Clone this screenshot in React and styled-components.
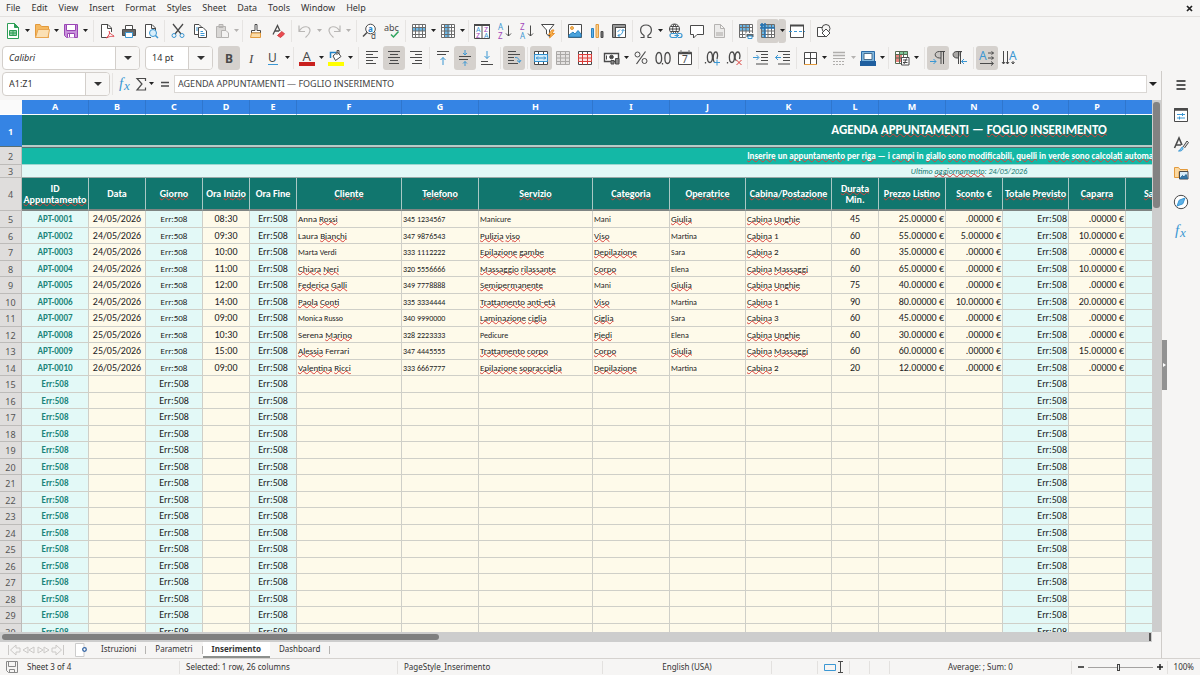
import React from "react";
import styled, { createGlobalStyle, css } from "styled-components";

const INK = "#4a4a4a";
const BLUE = "#3b97d3";
const TEAL = "#11766e";
const UI_FONT = '"Noto Sans", sans-serif';
const CELL_FONT = 'Carlito, Lato, sans-serif';

const GlobalStyle = createGlobalStyle`
  * { box-sizing: border-box; }
  body { margin: 0; background: #f6f5f4; }
  button, input { font: inherit; color: inherit; }
`;

const Shell = styled.div`
  display: flex;
  flex-direction: column;
  height: 100vh;
  overflow: hidden;
  background: #f6f5f4;
  color: #333;
  font: 9px/12px ${UI_FONT};
`;

/* ---------- menu bar ---------- */
const MenuBar = styled.nav`
  display: flex;
  align-items: center;
  height: 17px;
  padding: 0 5px 0 1px;
  border-bottom: 1px solid #e3e1df;
  flex: none;
`;
const MenuItem = styled.button`
  border: 0;
  background: none;
  padding: 0 5px 0 6px;
  line-height: 16px;
  &:first-child { padding-left: 5px; }
`;
const CloseButton = styled.button`
  margin-left: auto;
  border: 0;
  padding: 0;
  width: 12px;
  height: 12px;
  background: none;
  display: grid;
  place-items: center;
`;

/* ---------- toolbars ---------- */
const Toolbar = styled.div`
  display: flex;
  align-items: center;
  height: 27px;
  padding-left: 2px;
  flex: none;
`;
const ToolButton = styled.button`
  width: 22px;
  height: 24px;
  padding: 0;
  border: 0;
  border-radius: 3px;
  display: grid;
  place-items: center;
  flex: none;
  background: ${(p) => (p.$on ? "#d5d1cd" : "none")};
`;
const WizardButton = styled(ToolButton)`
  width: 20px;
`;
const SumButton = styled(ToolButton)`
  width: 12px;
`;
const EqualsButton = styled(ToolButton)`
  width: 18px;
`;
const CaretButton = styled.button`
  width: ${(p) => (p.$wide ? "9px" : "7px")};
  height: 24px;
  padding: 0;
  border: 0;
  border-radius: 0 3px 3px 0;
  display: grid;
  place-items: center;
  flex: none;
  color: ${(p) => (p.$off ? "#b5b3b1" : "#222")};
  background: ${(p) => (p.$on ? "#d5d1cd" : "none")};
`;
const Separator = styled.i`
  width: 1px;
  height: 22px;
  margin: 0 2px 0 ${(p) => (p.$wide ? "4px" : "2px")};
  background: #e6e4e2;
  flex: none;
`;
const Combo = styled.div`
  display: flex;
  width: ${(p) => p.$width}px;
  height: 24px;
  margin-right: ${(p) => p.$gap || 0}px;
  border: 1px solid #d3cfcb;
  border-radius: 4px;
  overflow: hidden;
  background: #fff;
  flex: none;
`;
const ComboInput = styled.input`
  flex: 1;
  min-width: 0;
  border: 0;
  outline: 0;
  padding: 0 6px;
  background: none;
  font-style: ${(p) => (p.$italic ? "italic" : "normal")};
`;
const ComboButton = styled.button`
  width: 24px;
  padding: 0;
  border: 0;
  border-left: 1px solid #d3cfcb;
  background: #f8f7f6;
  display: grid;
  place-items: center;
`;

/* ---------- work area ---------- */
const Work = styled.div`
  display: flex;
  flex: 1;
  min-height: 0;
`;
const Main = styled.main`
  display: flex;
  flex-direction: column;
  flex: 1;
  min-width: 0;
`;
const FormulaBar = styled.div`
  display: flex;
  align-items: center;
  height: 29px;
  padding: 0 4px 4px 2px;
  flex: none;
`;
const FormulaInput = styled.input`
  flex: 1;
  min-width: 0;
  height: 18px;
  padding: 0 3px;
  margin-right: 1px;
  border: 1px solid #dad7d4;
  outline: 0;
  background: #fff;
  color: #444;
`;
const GridArea = styled.div`
  display: flex;
  flex: 1;
  min-height: 0;
`;
const GridView = styled.div`
  flex: 1;
  min-width: 0;
  overflow: hidden;
`;

/* ---------- spreadsheet ---------- */
const Grid = styled.table`
  width: 1916px;
  table-layout: fixed;
  border-collapse: separate;
  border-spacing: 0;
  font: 10px/12px ${CELL_FONT};
  color: #222;
`;
const Row = styled.tr`
  height: ${(p) => p.$h}px;
`;
const ColumnHead = styled.th`
  padding: 0;
  background: ${(p) => (p.$corner ? "#fafafa" : "#3584e4")};
  border-right: 1px solid ${(p) => (p.$corner ? "#fafafa" : "#2f76cd")};
  border-bottom: 1px solid #fff;
  color: #fff;
  font: bold 9px/12px ${UI_FONT};
`;
const RowHead = styled.th`
  padding: 2px 0 0;
  background: ${(p) => (p.$on ? "#3584e4" : "#dfdddc")};
  border-right: 1px solid ${(p) => (p.$on ? "#3584e4" : "#bdbbb9")};
  border-bottom: 1px solid ${(p) => (p.$on ? "#5b6f70" : "#bdbbb9")};
  color: ${(p) => (p.$on ? "#fff" : "#555")};
  font: ${(p) => (p.$on ? "bold" : "normal")} 9px/10px ${UI_FONT};
`;
const Banner = styled.td`
  padding: 0;
  text-align: center;
  white-space: nowrap;
  ${(p) => p.$kind === "title" && css`
    background: ${TEAL};
    color: #fff;
    font: bold 13px/16px ${CELL_FONT};
    border-bottom: 2px solid #b9cbc8;
  `}
  ${(p) => p.$kind === "note" && css`
    background: #14b8a6;
    color: #fff;
    font-weight: bold;
    font-size: 9px;
    border-top: 1px solid #5b6f70;
    border-bottom: 1px solid #9fd8d0;
  `}
  ${(p) => p.$kind === "date" && css`
    background: #e3f9f7;
    color: ${TEAL};
    font-style: italic;
    font-size: 8px;
    border-bottom: 1px solid #9aa9a7;
  `}
`;
const HeadCell = styled.th`
  padding: 0;
  background: ${TEAL};
  color: #fff;
  font: bold 10px/11px ${CELL_FONT};
  white-space: pre;
  border-right: 1px solid #a9c8c4;
  border-bottom: 2px solid #7f8583;
`;
const Cell = styled.td`
  padding: 0 1px;
  overflow: hidden;
  white-space: nowrap;
  line-height: 12px;
  background: ${(p) => (p.$calc ? "#e3f9f7" : "#fefaea")};
  border-right: 1px solid #cfcfc8;
  border-bottom: 1px solid #cfcfc8;
  text-align: ${(p) => p.$align || "left"};
  font-size: ${(p) => p.$size}px;
  ${(p) => p.$id && css`
    color: #1b857a;
    font-weight: bold;
  `}
`;
const Misspelt = styled.span`
  text-decoration: underline wavy #d9403a 1px;
  text-decoration-skip-ink: none;
  text-underline-offset: -1px;
`;

/* ---------- scroll bars, tabs, sidebar, status ---------- */
const VScroll = styled.div`
  width: 9px;
  padding: 2px 1px;
  background: #cdcdcd;
  flex: none;
`;
const VThumb = styled.div`
  height: 106px;
  border-radius: 3px;
  background: #828282;
`;
const HScroll = styled.div`
  display: flex;
  align-items: center;
  justify-content: space-between;
  height: 10px;
  margin-right: 9px;
  padding-left: 2px;
  background: #cdcdcd;
  flex: none;
`;
const HThumb = styled.div`
  width: 38%;
  height: 6px;
  border-radius: 3px;
  background: #7f7f7f;
`;
const HGrip = styled.div`
  width: 3px;
  height: 8px;
  border-left: 2px solid #555;
`;
const Tabs = styled.div`
  display: flex;
  align-items: center;
  height: 16px;
  padding-left: 6px;
  font-size: 8px;
  flex: none;
`;
const TabNav = styled.button`
  width: 15px;
  height: 14px;
  padding: 0;
  border: 0;
  background: none;
`;
const AddTab = styled(TabNav)`
  width: 14px;
  margin: 0 4px 0 8px;
`;
const Tab = styled.button`
  height: 16px;
  padding: 0 9px;
  border: 0;
  border-bottom: 2px solid ${(p) => (p.$on ? "#8d908d" : "transparent")};
  background: ${(p) => (p.$on ? "#fff" : "none")};
  font-weight: ${(p) => (p.$on ? "bold" : "normal")};
  line-height: 14px;
`;
const TabRule = styled.i`
  width: 1px;
  height: 8px;
  background: #b5b3b1;
`;
const Sidebar = styled.aside`
  display: flex;
  width: 39px;
  border-left: 1px solid #cfccc9;
  flex: none;
`;
const Splitter = styled.button`
  align-self: center;
  width: 5px;
  height: 50px;
  padding: 0;
  border: 0;
  background: #929292;
  display: grid;
  place-items: center;
`;
const Deck = styled.div`
  flex: 1;
  display: flex;
  flex-direction: column;
  align-items: center;
  padding: 2px 5px 0 0;
`;
const DeckButton = styled.button`
  width: 24px;
  height: 29px;
  padding: 0;
  border: 0;
  background: none;
  display: grid;
  place-items: center;
  &:first-child { height: 24px; margin-bottom: 3px; }
`;
const StatusBar = styled.footer`
  display: flex;
  align-items: center;
  height: 17px;
  border-top: 1px solid #d5d2cf;
  font-size: 8px;
  flex: none;
`;
const Field = styled.div`
  flex: ${(p) => (p.$grow ? `${p.$grow} 1 0` : `0 0 ${p.$width}px`)};
  height: 13px;
  display: flex;
  align-items: center;
  justify-content: ${(p) => (p.$center ? "center" : "flex-start")};
  padding: 0 6px;
  gap: ${(p) => p.$gap || 0}px;
  border-left: ${(p) => (p.$first ? "0" : "1px solid #e3e1df")};
  white-space: nowrap;
`;
const ZoomField = styled(Field)`
  padding: 0 2px 0 4px;
`;
const ZoomRange = styled.input`
  appearance: none;
  flex: none;
  width: 65px;
  height: 12px;
  margin: 0;
  background: linear-gradient(#a5a3a1, #a5a3a1) center / 100% 1px no-repeat;
  &::-webkit-slider-thumb {
    appearance: none;
    width: 3px;
    height: 7px;
    border: 1px solid #444;
    background: #eee;
  }
`;
const ZoomButton = styled.button`
  flex: none;
  width: 10px;
  height: 12px;
  padding: 0;
  border: 0;
  background: none;
  display: grid;
  place-items: center;
`;

/* ---------- drawings ---------- */
const Drawing = styled.svg`
  display: block;
  overflow: visible;
`;
const Svg = ({ children, w = 16, h = 16 }) => (
  <Drawing width={w} height={h} viewBox={`0 0 ${w} ${h}`} fill="none" stroke={INK} strokeWidth="1" aria-hidden="true">
    {children}
  </Drawing>
);
const Caret = ({ big }) => (
  <Drawing width={big ? 8 : 5} height={big ? 4 : 3} viewBox="0 0 8 4" preserveAspectRatio="none" aria-hidden="true">
    <path d="M0 0H8L4 4Z" fill="currentColor" />
  </Drawing>
);
const Letter = ({ x, y, s = 8, c = INK, children, b, f = "Noto Sans", i }) => (
  <text x={x} y={y} fontSize={s} fill={c} stroke="none" fontFamily={f} fontWeight={b ? "bold" : "normal"} fontStyle={i ? "italic" : "normal"}>{children}</text>
);
const GridLines = ({ c = INK }) => (
  <path stroke={c} d="M1.5 1.5H14.5V14.5H1.5ZM4.5 1.5V14.5M8 1.5V14.5M11.5 1.5V14.5M1.5 4.5H14.5M1.5 8H14.5M1.5 11.5H14.5" />
);
const page = "M3.5 1.5H9.5L13.5 5.5V14.5H3.5ZM9.5 1.5V5.5H13.5";
const arrowDown = "M12.5 2.5V13M10 10.5L12.5 13L15 10.5";

const icons = {
  new: <><path stroke="#2f9e57" fill="#fff" d="M2.5 .5H9.5L13.5 4.5V15.5H2.5Z" /><path stroke="#2f9e57" fill="#2f9e57" d="M9.5 .5V4.5H13.5Z" /><path stroke="#2f9e57" fill="#8fd0a5" d="M4.5 7.5H11.5V12.5H4.5ZM4.5 10H11.5M8 7.5V12.5" /></>,
  open: <><path stroke="#e39a3c" fill="#f5b961" d="M1.5 14.5V1.5H6L7.5 3.5H14.5V14.5Z" /><path stroke="#eaa650" fill="#fbe0b4" d="M1.5 14.5L4 6.5H15.5L14 14.5Z" /></>,
  save: <><path stroke="#9a45b5" fill="#c791da" d="M1.5 1.5H14.5V14.5H3.5L1.5 12.5Z" /><path stroke="#9a45b5" fill="#fff" d="M3.5 1.5H12.5V7.5H3.5ZM4.5 14.5V10.5H11.5V14.5" /><path stroke="#9a45b5" d="M6.5 11V14" /></>,
  pdf: <><path fill="#fff" d="M9 14.5H2.5V1.5H9L12.5 5V9M8.5 1.5V5.5H12.5" /><path stroke="#e0454e" d="M7.5 15C10 12 11 10.5 10.5 8.5C9.5 7.5 9.5 10 15 13C15.5 14.5 12 12 7.5 15Z" /></>,
  print: <><path fill="#fff" d="M4.5 6V2.5H11.5V6" /><path fill="#666" d="M1.5 6.5H14.5V12.5H1.5Z" /><path stroke={BLUE} fill="#fff" d="M4.5 9.5H11.5V14.5H4.5Z" /></>,
  preview: <><path fill="#fff" d="M8 14.5H2.5V1.5H9L12.5 5V8M8.5 1.5V5.5H12.5" /><circle cx="10" cy="10" r="3.5" stroke={BLUE} fill="#d9effb" /><path stroke={BLUE} strokeWidth="1.5" d="M12.5 12.5L15 15" /></>,
  cut: <><path strokeWidth="1.3" d="M3 1L11 11M13 1L5 11" /><circle cx="4" cy="12.5" r="2" stroke={BLUE} /><circle cx="12" cy="12.5" r="2" stroke={BLUE} /></>,
  copy: <><path fill="#fff" d="M2.5 1.5H7L9.5 4V11.5H2.5Z" /><path fill="#fff" d="M6.5 4.5H11L14.5 8V14.5H6.5Z" /><path stroke={BLUE} d="M4 5H6M4 7H6M8.5 8.5H11M8.5 10.5H12.5M8.5 12.5H12.5" /></>,
  paste: <><path stroke="#b5b3b1" fill="#d9d7d5" d="M2.5 3.5H11.5V14.5H2.5ZM5 1.5H9V4.5H5Z" /><path stroke="#b5b3b1" fill="#f3f2f1" d="M7.5 7.5H12L14.5 10V14.5H7.5Z" /></>,
  brush: <><path fill="#fff" d="M7 1.5H9V7.5H12.5V10H3.5V7.5H7Z" /><path stroke="#e39a3c" fill="#fbdca8" d="M3.5 10H12.5V14.5H2.5Z" /></>,
  clear: <><path strokeWidth="1.3" d="M3 11.5L7.5 2.5L10 8M4.5 8H9" /><path fill="#ea4b50" stroke="#d33d43" d="M7.5 12.5L12 8.5L14.5 11L10.5 14.5Z" /></>,
  undo: <path stroke="#b9b7b5" strokeWidth="1.2" d="M2 2.5V8.5H8M2 8.5C6 1.5 13.5 3 13 8C12.5 11 10.5 12.5 8.5 14.5" />,
  redo: <path stroke="#b9b7b5" strokeWidth="1.2" d="M14 2.5V8.5H8M14 8.5C10 1.5 2.5 3 3 8C3.5 11 5.5 12.5 7.5 14.5" />,
  find: <><circle cx="8.5" cy="6" r="4.8" fill="#fff" /><path strokeWidth="1.5" d="M5 9.5L1 13.5" /><Letter x={6} y={8.5} c="#2383c8" b s={8}>a</Letter><Letter x={9} y={15.5} s={8}>d</Letter></>,
  spell: <><Letter x={0} y={8} s={9}>abc</Letter><path stroke="#2fa45f" strokeWidth="1.5" d="M7 11.5L9.5 14L14.5 8.5" /></>,
  row: <><path fill="#fff" stroke="none" d="M1 1H15V15H1Z" /><path fill="#6bb8e8" stroke="none" d="M1 4.5H15V8H1Z" /><GridLines c="#6c6c6c" /></>,
  col: <><path fill="#fff" stroke="none" d="M1 1H15V15H1Z" /><path fill="#6bb8e8" stroke="none" d="M5 1H9.5V15H5Z" /><GridLines c="#6c6c6c" /></>,
  autofilter: <><path fill="#fff" d="M.5 1.5H15.5V15.5H.5ZM8 2V15" /><path strokeWidth="2" d="M0 2H16" /><Letter x={2} y={9} s={7} c={BLUE}>A</Letter><Letter x={2} y={15} s={7} c="#a347ba">Z</Letter><Letter x={10} y={9} s={7} c="#a347ba">Z</Letter><Letter x={10} y={15} s={7} c={BLUE}>A</Letter></>,
  asc: <><Letter x={2} y={7} s={8} c={BLUE}>A</Letter><Letter x={2} y={16} s={8} c="#a347ba">Z</Letter><path d={arrowDown} /></>,
  desc: <><Letter x={2} y={7} s={8} c="#a347ba">Z</Letter><Letter x={2} y={16} s={8} c={BLUE}>A</Letter><path d={arrowDown} /></>,
  filter: <><path fill="#fff" d="M1.5 1.5H14L9.5 7V13.5L6.5 11V7Z" /><path stroke="#e9902c" fill="#f7b657" d="M12 7L8.5 11.5H11L9.5 15L14.5 10.5H12L14 7Z" /></>,
  image: <><path fill="#fff" d="M1.5 1.5H14.5V14.5H1.5Z" /><circle cx="5" cy="5" r="1.5" fill="#f5b961" stroke="#e39a3c" /><path fill="#4aa3dc" stroke="#2b83c2" d="M2 14L2 12L6 9L8 11L11 7.5L14 11V14Z" /></>,
  chart: <><path stroke="#2b83c2" fill="#63b2e4" d="M2.5 5.5H4.5V14.5H2.5Z" /><path stroke="#e39a3c" fill="#f9cf8d" d="M7 1.5H9.5V14.5H7Z" /><path fill="#777" d="M12 8.5H14V14.5H12Z" /></>,
  pivot: <><path fill="#fff" d="M1.5 1.5H14.5V14.5H1.5ZM1.5 4.5H14.5M4.5 1.5V14.5" /><path strokeWidth="2" stroke="#999" d="M2 3H14M3 3V14" /><path stroke={BLUE} d="M7 12.5C10 12.5 12 10 12 6.5M10.5 8L12 6.5L13.5 8M8.5 11L7 12.5L8.5 14M6.5 9L9 6.5" /></>,
  omega: <path strokeWidth="1.2" d="M2.5 14.5H6V12.5C1 9.500 1.500 2 8 2S15 9.500 10 12.500V14.5H13.5" />,
  link: <><circle cx="7.5" cy="6" r="5" fill="#fff" /><path d="M2.5 6H12.5M7.5 1C5 3 5 9 7.5 11C10 9 10 3 7.5 1M3.5 3.5H11.5M3.5 8.5H11.5" /><path stroke={BLUE} fill="#f6f5f4" strokeWidth="1.2" d="M5 10.5H8.5A2 2 0 0 1 8.5 14.5H5A2 2 0 0 1 5 10.5ZM11 10.5H13A2 2 0 0 1 13 14.5H11M7.5 12.5H12" /></>,
  comment: <path fill="#fff" d="M1.5 2.5H14.5V11.5H8L4.5 15V11.5H1.5Z" />,
  header: <><path stroke="#b5b3b1" fill="#ecebea" d={page} /><path fill="#cbc9c7" stroke="none" d="M5 9H12V13H5Z" /></>,
  printarea: <><path fill="#fff" stroke="none" d="M1 1H15V15H1Z" /><path fill="#6bb8e8" stroke="none" d="M1 1H12V8H1Z" /><GridLines c="#6c6c6c" /><path fill="#5d666d" stroke="#f6f5f4" d="M8 10.5H16V14.5H8Z" /><path fill="#fff" stroke={BLUE} d="M10 13H14V15.5H10Z" /></>,
  freeze: <><path fill="#fff" stroke="none" d="M2 2H15V15H2Z" /><path fill="#6bb8e8" stroke="none" d="M2 2H15V5H5V15H2Z" /><GridLines c="#6c6c6c" /><path stroke="#2474b5" strokeWidth="1.5" d="M5 0V15M0 5H15M0 2H4M2 0V4" /></>,
  split: <><path fill="#fff" d="M1.5 2.5H14.5V14.5H1.5Z" /><path strokeWidth="2" d="M1 2.5H15" /><path stroke={BLUE} strokeDasharray="3 2" d="M0 8.5H16" /></>,
  shapes: <><path fill="#fff" d="M1.5 4.5H9V13.5H1.5Z" /><circle cx="10" cy="5.5" r="4" fill="#f6f5f4" /><path fill="#fff" d="M10 6L14 10L10 14L6 10Z" /></>,
  bold: <Letter x={4} y={12.5} s={12} b>B</Letter>,
  italic: <Letter x={6} y={12.5} s={13} i f="Liberation Serif">I</Letter>,
  underline: <><Letter x={3} y={11.5} s={12}>U</Letter><path stroke={BLUE} d="M3 14.5H13" /></>,
  fontcolor: <><Letter x={3.5} y={10.5} s={13}>A</Letter><path fill="#c9211e" stroke="none" d="M0 12H16V16H0Z" /></>,
  highlight: <><path fill="#ffff00" stroke="none" d="M0 12H16V16H0Z" /><path fill="#fff" d="M5 6L9.5 2L13 6.5L7.5 10.5Z" /><path stroke="#2383c8" strokeWidth="1.5" d="M2.5 8V2.5H8" /><path d="M9 5V.5H11V4" /></>,
  left: <path d="M2 1.5H14M2 4.5H9M2 7.5H14M2 10.5H9M2 13.5H12" />,
  center: <path d="M2 1.5H14M4 4.5H12M2 7.5H14M4 10.5H12M3 13.5H13" />,
  right: <path d="M2 1.5H14M7 4.5H14M2 7.5H14M7 10.5H14M4 13.5H14" />,
  top: <><path d="M2 1.5H14M2 4.5H11" /><path stroke={BLUE} d="M8 15V7.5M5.5 10L8 7.5L10.5 10" /></>,
  middle: <><path d="M2 6.5H14M2 9.5H11" /><path stroke={BLUE} d="M8 0V5M6 3L8 5L10 3M8 16V11.5M6 13.5L8 11.5L10 13.5" /></>,
  bottom: <><path d="M2 11.5H9M2 14.5H14" /><path stroke={BLUE} d="M8 1V8.5M5.5 6L8 8.5L10.5 6" /></>,
  wrap: <><path d="M2 1.5H10M2 4.5H14M2 7.5H8M2 10.5H8M2 13.5H12" /><path stroke={BLUE} d="M9 7.5C12 7.5 13 8.5 13.5 12M11 10.5L13.5 12.5L15 10" /></>,
  merge: <><path fill="#fff" d="M1.5 1.5H14.5V14.5H1.5ZM5.5 1.5V14.5M10.5 1.5V14.5M1.5 11.5H14.5M1.5 4.5H14.5" /><path fill="#d2ebf9" stroke="#2f8fce" d="M1.5 4.5H14.5V11.5H1.5ZM3 8H13M5 6.5L3.5 8L5 9.5M11 6.5L12.5 8L11 9.5" /></>,
  unmerge: <path fill="#e4e2e1" stroke="#aaa8a6" d="M1.5 1.5H14.5V14.5H1.5ZM5.5 1.5V14.5M10.5 1.5V14.5M1.5 4.5H14.5M1.5 8H14.5M1.5 11.5H14.5" />,
  cells: <><path fill="#fff" d="M1.5 1.5H14.5V14.5H1.5ZM5.5 1.5V4.5M10.5 1.5V4.5" /><path fill="#fbe3e2" stroke="#d93c38" d="M1.5 4.5H14.5V11.5H1.5ZM1.5 8H14.5M5.5 4.5V14.5M10.5 4.5V14.5" /></>,
  currency: <><path fill="#fff" strokeWidth="1.4" d="M.5 3.5H14.5V11.5H.5Z" /><circle cx="7.5" cy="7" r="1.8" fill={INK} /><path d="M2.5 5.5V9.5" /><path fill="#888" d="M7 10.5H10V14H7ZM11.5 8.5H15V14H11.5Z" /></>,
  percent: <><circle cx="4.5" cy="4.5" r="2.5" /><circle cx="11.5" cy="11" r="2.5" /><path strokeWidth="1.2" d="M12.5 1.5L3.5 14" /></>,
  number: <path strokeWidth="1.3" d="M4 2.5C0 2.5 0 13.5 4 13.5S7 2.5 4 2.5ZM12.5 2.5C9 2.5 9 13.5 12.5 13.5S16 2.5 12.5 2.5ZM7.5 13V14.5" />,
  date: <><path fill="#fff" d="M1.5 2.5H14.5V14.5H1.5Z" /><path strokeWidth="2.5" d="M1.5 3H14.5" /><path stroke="#777" d="M4 0V3M12 0V3" /><Letter x={5} y={13} s={10}>7</Letter></>,
  adddec: <><path strokeWidth="1.3" d="M6 2C2.5 2 2.5 12.5 6 12.5S9 2 6 2ZM13 9C14.5 5 13 2 12 2C8.5 2 8.5 12.5 11 12.5M1.5 12V13.5" /><path stroke={BLUE} d="M13 9.5V15.5M10 12.5H16" /></>,
  deldec: <><path strokeWidth="1.3" d="M6 2C2.5 2 2.5 12.5 6 12.5S9 2 6 2ZM13.5 9C15 5 13 2 12 2C8.5 2 8.5 10 10.5 10.5M1.5 12V13.5" /><path stroke="#d93c38" d="M10.5 10L15.5 15M15.5 10L10.5 15" /></>,
  indent: <><path d="M3 1.5H15M8 4.5H15M8 7.5H15M8 10.5H15M3 14H15" /><path stroke={BLUE} d="M0 7.5H5.5M3.5 5L6 7.5L3.5 10" /></>,
  outdent: <><path d="M3 1.5H15M8 4.5H15M8 7.5H15M8 10.5H15M3 14H15" /><path stroke={BLUE} d="M.5 7.5H6M3 5L.5 7.5L3 10" /></>,
  borders: <><path fill="#fff" d="M2.5 14V2.5H14.5V14M2.5 8.5H14.5M8.5 2.5V14.5" /><path stroke="#e39a3c" d="M2 14.5H15" /></>,
  linestyle: <><path stroke="#b0aeac" strokeWidth="1.5" d="M2 2.5H14M2 5.5H14" /><path stroke="#b0aeac" d="M2 8.5H14" /><path stroke="#b0aeac" strokeDasharray="2 1" d="M2 11.5H14M2 14.5H14" /></>,
  linecolor: <><path stroke="#2b6aa8" fill="#7fb7de" d="M1.5 11V1.5H14.5V11" /><path fill="#fff" d="M4 3.5H12V9.5H4Z" stroke="#4a6d8c" /><path fill="#2060a0" stroke="none" d="M0 11H16V16H0Z" /></>,
  cond: <><path fill="#fff" stroke="none" d="M1 1H14V14H1Z" /><path fill="#7fc797" stroke="none" d="M5 1H14V4.5H5Z" /><path fill="#e88480" stroke="none" d="M2 5H8V12H2Z" /><path stroke="#556b52" d="M1.5 1.5H13.5V13.5H1.5ZM1.5 4.5H13.5M1.5 8H13.5M5.5 1.5V13.5M9.5 1.5V8" /><path fill="#fff" d="M7.5 7.5H15V15H7.5ZM9 10H13.5M9 12.5H13.5M12.5 8.5L10 14" /></>,
  ltr: <><path d="M11 14V2M13.5 14V2M15 1.5H9.5C3.5 1.5 4 8 9.5 8H11" fill="#c9c6c3" /><path stroke={BLUE} d="M0 11.5H6M3.5 9L6 11.5L3.5 14" /></>,
  rtl: <><path d="M6.5 14V2M8.5 14V2M10 1.5H5C-.5 1.5 0 8 5 8H6.5" fill="#a9a7a5" /><path stroke={BLUE} d="M15 11.5H9.5M12 9L9.5 11.5L12 14" /></>,
  texth: <><Letter x={0} y={10} s={12} c={BLUE}>A</Letter><path d="M9 3H14.5M9 8H14.5M1 13.5H14M12.5 1.5L14.5 3L12.5 4.5M12.5 6.5L14.5 8L12.5 9.5M12 11.5L14.5 13.5L12 15.5" /></>,
  textv: <><Letter x={8} y={10} s={12} c={BLUE}>A</Letter><path d="M2.5 1V14M6.5 1V14M12 11V14M1 12L2.5 14L4 12M5 12L6.5 14L8 12M10.5 12L12 14L13.5 12" /></>,
  fx: <><Letter x={2} y={12} s={15} c={BLUE} i f="Liberation Serif">f</Letter><Letter x={7} y={14} s={13} c={BLUE} i f="Liberation Serif">x</Letter></>,
  sigma: <path strokeWidth="1.2" d="M9.5 5V2.5H1L6 8L1 14H9.5V11.5" />,
  equals: <path strokeWidth="1.5" d="M4 6.5H12M4 10H12" />,
  burger: <path stroke="#222" strokeWidth="1.5" d="M3.5 4H12.5M3.5 8H12.5M3.5 12H12.5" />,
  props: <><path fill="#fff" d="M1.5 1.5H14.5V14.5H1.5Z" /><path strokeWidth="2.5" d="M1 2.5H15" /><path stroke={BLUE} d="M4 7.5H12M4 11H12M9.5 6V9M6.5 9.5V12.5" /></>,
  stylesdeck: <><path strokeWidth="1.6" d="M1.5 12L6 2L9 9M3 9H8" /><path stroke={BLUE} fill="#8cc7ec" d="M5.5 15C9 15.5 11 13 9.5 11C8 11 8 14 5.5 15Z" /><path d="M10 11L14 5L15.5 6.5L11.5 12" fill="#ddd" /></>,
  gallery: <><path stroke="#e39a3c" fill="#fbd9a2" d="M1.5 12.5V2.5H5.5L7 4.5H14.5V6.5H6V12.5Z" /><path fill="#d6ecf9" d="M6.5 6.5H15V14H6.5Z" /><path stroke="#2b6a98" fill="#3878a8" d="M7 13.5L9.5 10.5L11 12L13 9.5L14.5 13.5Z" /></>,
  navigator: <><circle cx="8" cy="8" r="6.7" fill="#fff" /><path stroke={BLUE} fill="#5db0e5" d="M12 4L9.8 9.8L4 12L6.2 6.2Z" /></>,
};
const Icon = ({ name, w }) => <Svg w={w}>{icons[name]}</Svg>;

/* "+" adds a caret, "-" a disabled caret, "*" marks a pressed tool; "|" and "||" are separators. */
const standardTools = [
  "new+", "open+", "save+", "||", "pdf", "print", "preview", "|", "cut", "copy", "paste-", "|",
  "brush", "clear", "|", "undo-", "redo-", "||", "find", "spell", "|", "row+", "col+", "|",
  "autofilter", "asc", "desc", "filter", "|", "image", "chart", "pivot", "|", "omega+", "link",
  "comment", "header", "|", "printarea", "freeze*+", "split", "|", "shapes",
];
const formatTools = [
  "bold*", "italic", "underline+", "|", "fontcolor+", "highlight+", "||", "left", "center*", "right",
  "|", "top", "middle*", "bottom", "|", "wrap*", "|", "merge*", "unmerge", "cells", "|", "currency+",
  "percent", "number", "date", "|", "adddec", "deldec", "|", "indent", "outdent", "|", "borders+",
  "linestyle-", "linecolor+", "|", "cond+", "||", "ltr*", "rtl", "|", "texth*", "textv",
];
const Tools = ({ list }) =>
  list.map((item, i) => {
    if (item[0] === "|") return <Separator key={i} $wide={item === "||"} />;
    const name = item.replace(/[*+-]/g, "");
    const on = item.includes("*");
    const off = item.includes("-");
    return (
      <React.Fragment key={i}>
        <ToolButton type="button" aria-label={name} $on={on}><Icon name={name} /></ToolButton>
        {(off || item.includes("+")) && (
          <CaretButton type="button" aria-label={`${name} options`} $off={off} $on={on}><Caret /></CaretButton>
        )}
      </React.Fragment>
    );
  });

/* ---------- sheet data; [word] is flagged by the spell checker ---------- */
const Words = ({ children }) =>
  String(children).split(/(\[[^\]]*\])/).map((part, i) =>
    part[0] === "[" ? <Misspelt key={i}>{part.slice(1, -1)}</Misspelt> : part
  );

const columns = [
  ["A", 67, "ID\n[Appuntamento]"], ["B", 57, "Data"], ["C", 57, "[Giorno]"], ["D", 47, "Ora [Inizio]"],
  ["E", 47, "Ora Fine"], ["F", 105, "[Cliente]"], ["G", 77, "[Telefono]"], ["H", 114, "[Servizio]"],
  ["I", 77, "[Categoria]"], ["J", 76, "[Operatrice]"], ["K", 86, "[Cabina]/[Postazione]"],
  ["L", 47, "[Durata]\nMin."], ["M", 67, "[Prezzo] [Listino]"], ["N", 57, "[Sconto] €"],
  ["O", 66, "[Totale] [Previsto]"], ["P", 57, "[Caparra]"], ["Q", 67, "[Saldo] €"], ["", 723, ""],
];
const keys = "ABCDEFGHIJKLMNOPQ".split("");
const aligns = { A: "center", B: "center", C: "center", D: "center", E: "center", L: "center", M: "right", N: "right", O: "right", P: "right" };
const calculated = "ACEOQ";

const bookings = [
  ["APT-0001", "24/05/2026", "08:30", "Anna [Rossi]", "345 1234567", "Manicure", "Mani", "[Giulia]", "[Cabina] [Unghie]", "45", "25.00000 €", ".00000 €", ".00000 €"],
  ["APT-0002", "24/05/2026", "09:30", "Laura [Bianchi]", "347 9876543", "[Pulizia] [viso]", "[Viso]", "Martina", "[Cabina] 1", "60", "55.00000 €", "5.00000 €", "10.00000 €"],
  ["APT-0003", "24/05/2026", "10:00", "Marta Verdi", "333 1112222", "[Epilazione] [gambe]", "[Depilazione]", "Sara", "[Cabina] 2", "60", "35.00000 €", ".00000 €", ".00000 €"],
  ["APT-0004", "24/05/2026", "11:00", "[Chiara] [Neri]", "320 5556666", "[Massaggio] [rilassante]", "[Corpo]", "Elena", "[Cabina] [Massaggi]", "60", "65.00000 €", ".00000 €", "10.00000 €"],
  ["APT-0005", "24/05/2026", "12:00", "[Federica] [Galli]", "349 7778888", "[Semipermanente]", "Mani", "[Giulia]", "[Cabina] [Unghie]", "75", "40.00000 €", ".00000 €", ".00000 €"],
  ["APT-0006", "24/05/2026", "14:00", "[Paola] [Conti]", "335 3334444", "[Trattamento] [anti-età]", "[Viso]", "Martina", "[Cabina] 1", "90", "80.00000 €", "10.00000 €", "20.00000 €"],
  ["APT-0007", "25/05/2026", "09:00", "Monica Russo", "340 9990000", "[Laminazione] [ciglia]", "[Ciglia]", "Sara", "[Cabina] 3", "60", "45.00000 €", ".00000 €", ".00000 €"],
  ["APT-0008", "25/05/2026", "10:30", "Serena [Marino]", "328 2223333", "Pedicure", "[Piedi]", "Elena", "[Cabina] [Unghie]", "60", "30.00000 €", ".00000 €", ".00000 €"],
  ["APT-0009", "25/05/2026", "15:00", "[Alessia] Ferrari", "347 4445555", "[Trattamento] [corpo]", "[Corpo]", "[Giulia]", "[Cabina] [Massaggi]", "60", "60.00000 €", ".00000 €", "15.00000 €"],
  ["APT-0010", "26/05/2026", "09:00", "[Valentina] [Ricci]", "333 6667777", "[Epilazione] [sopracciglia]", "[Depilazione]", "Martina", "[Cabina] 2", "20", "12.00000 €", ".00000 €", ".00000 €"],
];
const ERR = "Err:508";
const toCells = (b) => {
  if (!b) return { A: ERR, C: ERR, E: ERR, O: ERR };
  const [A, B, D, F, G, H, I, J, K, L, M, N, P] = b;
  return { A, B, C: ERR, D, E: ERR, F, G, H, I, J, K, L, M, N, O: ERR, P };
};
const sizeOf = (key, text, booked) => {
  if (key === "A" || (key === "C" && booked)) return 9;
  if ("FGHIJK".includes(key)) return text && text.includes("[") ? 9 : 8;
  return 10;
};

const Sheet = () => (
  <Grid>
    <colgroup>
      <col style={{ width: 22 }} />
      {columns.map(([name, width]) => <col key={name} style={{ width }} />)}
    </colgroup>
    <thead>
      <Row $h={15}>
        <ColumnHead $corner />
        {columns.map(([name]) => <ColumnHead key={name} scope="col">{name}</ColumnHead>)}
      </Row>
    </thead>
    <tbody>
      <Row $h={32}>
        <RowHead $on scope="row">1</RowHead>
        <Banner $kind="title" colSpan={18}><Words>AGENDA [APPUNTAMENTI] — [FOGLIO] [INSERIMENTO]</Words></Banner>
      </Row>
      <Row $h={18}>
        <RowHead scope="row">2</RowHead>
        <Banner $kind="note" colSpan={18}>
          <Words>[Inserire] un [appuntamento] per [riga] — i [campi] in [giallo] [sono] [modificabili], [quelli] in [verde] [sono] [calcolati] [automaticamente]</Words>
        </Banner>
      </Row>
      <Row $h={13}>
        <RowHead scope="row">3</RowHead>
        <Banner $kind="date" colSpan={18}><Words>Ultimo [aggiornamento]: 24/05/2026</Words></Banner>
      </Row>
      <Row $h={33}>
        <RowHead scope="row">4</RowHead>
        {columns.map(([name, , label]) => (
          <HeadCell key={name}><Words>{label}</Words></HeadCell>
        ))}
      </Row>
      {Array.from({ length: 26 }, (_, i) => {
        const cells = toCells(bookings[i]);
        return (
          <Row key={i} $h={i % 2 ? 16 : 17}>
            <RowHead scope="row">{i + 5}</RowHead>
            {keys.map((k) => (
              <Cell key={k} $id={k === "A"} $calc={calculated.includes(k)} $align={aligns[k]} $size={sizeOf(k, cells[k], bookings[i])}>
                <Words>{cells[k] || ""}</Words>
              </Cell>
            ))}
            <Cell $size={10} />
          </Row>
        );
      })}
    </tbody>
  </Grid>
);

const navShapes = [
  "M2.5 2V12M10 2L4.5 7L10 12V9H14V5H10Z",
  "M7 4L2 7L7 10ZM13 4L8 7L13 10Z",
  "M2 4L7 7L2 10ZM8 4L13 7L8 10Z",
  "M12.5 2V12M5 2L10.5 7L5 12V9H1V5H5Z",
];

export default function App() {
  return (
    <Shell>
      <GlobalStyle />
      <MenuBar>
        {["File", "Edit", "View", "Insert", "Format", "Styles", "Sheet", "Data", "Tools", "Window", "Help"].map((m) => (
          <MenuItem type="button" key={m}>{m}</MenuItem>
        ))}
        <CloseButton type="button" aria-label="Close document">
          <Svg w={7} h={7}><path stroke="#222" strokeWidth="1.7" d="M1 1L6 6M6 1L1 6" /></Svg>
        </CloseButton>
      </MenuBar>
      <Toolbar><Tools list={standardTools} /></Toolbar>
      <Toolbar>
        <Combo $width={138} $gap={5}>
          <ComboInput $italic aria-label="Font name" defaultValue="Calibri" />
          <ComboButton type="button" aria-label="Choose font"><Caret big /></ComboButton>
        </Combo>
        <Combo $width={68} $gap={5}>
          <ComboInput aria-label="Font size" defaultValue="14 pt" />
          <ComboButton type="button" aria-label="Choose size"><Caret big /></ComboButton>
        </Combo>
        <Tools list={formatTools} />
      </Toolbar>
      <Work>
        <Main>
          <FormulaBar>
            <Combo $width={108}>
              <ComboInput aria-label="Name box" defaultValue="A1:Z1" />
              <ComboButton type="button" aria-label="Choose range"><Caret big /></ComboButton>
            </Combo>
            <Separator />
            <WizardButton type="button" aria-label="Function wizard"><Icon name="fx" /></WizardButton>
            <SumButton type="button" aria-label="Select function"><Icon name="sigma" w={10} /></SumButton>
            <CaretButton type="button" $wide aria-label="Function options"><Caret /></CaretButton>
            <EqualsButton type="button" aria-label="Formula"><Icon name="equals" /></EqualsButton>
            <FormulaInput aria-label="Input line" defaultValue="AGENDA APPUNTAMENTI — FOGLIO INSERIMENTO" />
            <CaretButton type="button" $wide aria-label="Expand formula bar"><Caret big /></CaretButton>
          </FormulaBar>
          <GridArea>
            <GridView><Sheet /></GridView>
            <VScroll><VThumb /></VScroll>
          </GridArea>
          <HScroll><HThumb /><HGrip /></HScroll>
          <Tabs>
            {navShapes.map((d, i) => (
              <TabNav type="button" key={i} aria-label={["First", "Previous", "Next", "Last"][i]}>
                <Svg w={15} h={14}><path stroke="#cbc9c7" d={d} /></Svg>
              </TabNav>
            ))}
            <AddTab type="button" aria-label="Insert sheet">
              <Svg w={14} h={14}><path fill="#fff" stroke="#ccc" d="M1.5 13.5V.5H10V13.5Z" /><circle cx="10.5" cy="6.5" r="1.8" stroke="#3465a4" fill="#fff" strokeWidth="1.3" /></Svg>
            </AddTab>
            <Tab type="button">Istruzioni</Tab><TabRule />
            <Tab type="button">Parametri</Tab><TabRule />
            <Tab type="button" $on>Inserimento</Tab>
            <Tab type="button">Dashboard</Tab><TabRule />
          </Tabs>
        </Main>
        <Sidebar>
          <Splitter type="button" aria-label="Hide sidebar">
            <Svg w={5} h={6}><path fill="#fff" stroke="none" d="M1 1L4 3L1 5Z" /></Svg>
          </Splitter>
          <Deck>
            {["burger", "props", "stylesdeck", "gallery", "navigator", "fx"].map((n) => (
              <DeckButton type="button" key={n} aria-label={n}><Icon name={n} /></DeckButton>
            ))}
          </Deck>
        </Sidebar>
      </Work>
      <StatusBar>
        <Field $first $width={179} $gap={9}>
          <Svg w={12} h={12}><path stroke="#888" d="M.5 .5H11.5V11.5H2.5L.5 9.5ZM2.5 .5V5.5H9.5V.5M3.5 11.5V8.5H8.5V11.5" /></Svg>
          Sheet 3 of 4
        </Field>
        <Field $width={218}>Selected: 1 row, 26 columns</Field>
        <Field $width={205}>PageStyle_Inserimento</Field>
        <Field $width={169} $center>English (USA)</Field>
        <Field $width={46} />
        <Field $width={31} $gap={2}>
          <Svg w={12} h={10}><path stroke={BLUE} d="M.5 2.5H11.5V8.5H.5Z" /></Svg>
          <Svg w={5} h={12}><path d="M0 .5H5M2.5 .5V11.5M0 11.5H5" /></Svg>
        </Field>
        <Field $width={20} />
        <Field $width={20} />
        <Field $grow={1} $center>Average: ; Sum: 0</Field>
        <ZoomField $width={96} $gap={2}>
          <ZoomButton type="button" aria-label="Zoom out"><Svg w={8} h={8}><path stroke="#222" strokeWidth="1.5" d="M1 4H7" /></Svg></ZoomButton>
          <ZoomRange type="range" aria-label="Zoom" min="0" max="100" defaultValue="48" />
          <ZoomButton type="button" aria-label="Zoom in"><Svg w={8} h={8}><path stroke="#222" strokeWidth="1.5" d="M1 4H7M4 1V7" /></Svg></ZoomButton>
        </ZoomField>
        <Field $width={33}>100%</Field>
      </StatusBar>
    </Shell>
  );
}
